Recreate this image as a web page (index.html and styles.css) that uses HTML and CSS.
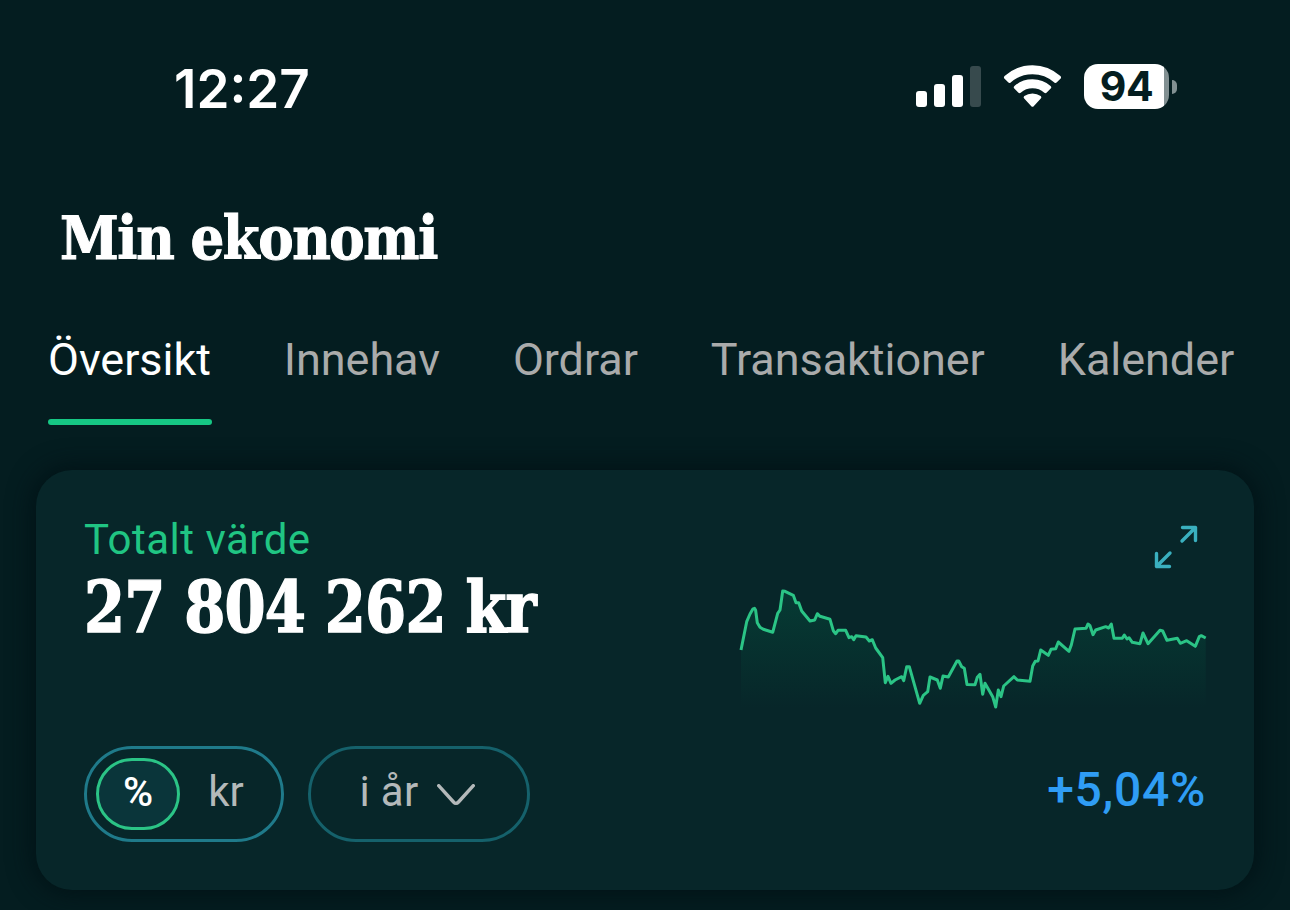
FILE: index.html
```
<!DOCTYPE html>
<html lang="sv">
<head>
    <meta charset="UTF-8">
    <meta name="viewport" content="width=device-width, initial-scale=1.0">
    <title>Min ekonomi</title>
    <link rel="stylesheet" href="styles.css">
</head>
<body>
    <div class="status-bar">
        <span class="time">12:27</span>
        <div class="status-icons">
            <svg class="signal" viewBox="0 0 66 42">
                <rect x="0" y="25" width="11" height="16" rx="3"/>
                <rect x="18" y="18" width="11" height="23" rx="3"/>
                <rect x="36" y="9" width="11" height="32" rx="3"/>
                <rect class="dim" x="54" y="0" width="11" height="41" rx="3"/>
            </svg>
            <svg class="wifi" viewBox="1003 65 59 43">
                <path d="M1004.6 78.8Q1003.2 77.4 1004.6 76.1Q1016.5 65.2 1032.5 65.2Q1048.500 65.200 1060.400 76.100Q1061.800 77.400 1060.400 78.800L1056.600 82.600Q1055.500 83.600 1054.300 82.500Q1045 74.200 1032.500 74.200Q1020 74.200 1010.700 82.500Q1009.500 83.600 1008.400 82.600Z"/>
                <path d="M1014.300 88.600Q1013.100 87.300 1014.400 86.100Q1022 79.300 1032.500 79.300Q1043 79.300 1050.600 86.100Q1051.900 87.300 1050.700 88.600L1046.500 92.700Q1045.500 93.600 1044.300 92.700Q1039.200 88.300 1032.500 88.300Q1025.800 88.300 1020.700 92.700Q1019.500 93.600 1018.500 92.700Z"/>
                <path d="M1024.200 98.500Q1022.900 97.200 1024.300 96.100Q1027.900 93.600 1032.500 93.600Q1037.100 93.600 1040.700 96.100Q1042.100 97.200 1040.800 98.500L1033.700 106.200Q1032.500 107.400 1031.300 106.200Z"/>
            </svg>
            <div class="battery"><span class="battery-level">94</span></div>
        </div>
    </div>

    <h1>Min ekonomi</h1>

    <nav class="tabs">
        <a class="tab active">Översikt</a>
        <a class="tab">Innehav</a>
        <a class="tab">Ordrar</a>
        <a class="tab">Transaktioner</a>
        <a class="tab">Kalender</a>
    </nav>

    <section class="card">
        <div class="card-top">
            <div class="total">
                <p class="label">Totalt värde</p>
                <p class="amount">27 804 262 kr</p>
            </div>
            <div class="chart-box">
                <svg class="expand" viewBox="0 0 44 44">
                    <path d="M28.500 2.500H41.500V15.500M41.500 2.500L28 16"/>
                    <path d="M2.500 28.500V41.500H15.500M2.500 41.500L16 28"/>
                </svg>
                <svg class="chart" viewBox="738 585 470 130">
                    <defs>
                        <linearGradient id="fade" x1="0" y1="590" x2="0" y2="708" gradientUnits="userSpaceOnUse">
                            <stop offset="0" stop-color="#063f36"/>
                            <stop offset="1" stop-color="#063f36" stop-opacity="0"/>
                        </linearGradient>
                    </defs>
                    <path id="area" class="area"/>
                    <polyline id="line" class="line" points="741,650 746.700,621.700 750,614 753,608.800 754.500,608.300 755.600,610 757.300,622.700 760,627.300 763.300,629.300 772.700,632.300 777.700,613.300 780,610 782.700,591 785,591.300 793.300,595.300 796,602.700 798.700,602.700 801.700,611 810,621 814.700,620 817.300,613.700 820,616.300 830,619.300 833.300,630.700 835.700,633.700 838,630.300 845.700,630.300 849,637.700 851.700,636.700 853.700,639.700 856,635.700 866,637 869.300,641 872.300,639.700 875.700,648 882.700,657.700 885.300,682.700 888,676.300 891,683.300 895,680 901.700,676.700 903.700,680.700 906.700,666.700 909.300,666.700 919.700,703.300 923.300,695.300 927.700,691.700 930,677 937.300,680 940.300,688.300 943,676 948.300,677 957,661 958.700,661 961.700,666.700 964.300,668.300 967,684.500 975,684.700 977.300,677.300 980,674.300 982.700,694.300 985,683.300 992.700,696.700 995.700,707 998.300,690 1001,696.700 1003.700,686 1014,676.700 1017.300,680 1030,681.300 1032.700,666 1035.300,661.300 1038,661 1040.700,650 1048.300,655.300 1051,649.300 1055.700,648.700 1058.300,642 1069,651.300 1071.300,645 1075,629 1086,628.300 1088,624 1090,625.700 1093,634.700 1095.700,630 1105.700,626.700 1108.700,628 1111.300,624 1114,638.300 1122.300,638.300 1124.300,635 1127,639 1129,637.700 1132.300,642.300 1140,643.700 1143,633 1148,643.700 1160,630.300 1162.700,631 1167,640.300 1177.300,638.300 1180.300,643.300 1186.700,640.700 1195.300,646.300 1199.300,636.700 1201.300,635.700 1205.700,638"/>
                </svg>
            </div>
        </div>
        <div class="card-bottom">
            <div class="toggle">
                <button class="unit selected">%</button>
                <button class="unit">kr</button>
            </div>
            <button class="period">
                i år
                <svg class="chevron" viewBox="0 0 38 22">
                    <path d="M1.700 1.700L16.500 18Q19 20.800 21.500 18L36.300 1.700"/>
                </svg>
            </button>
            <span class="change">+5,04%</span>
        </div>
    </section>

    <script>
        // Fill the area under the line
        const line = document.getElementById("line");
        const points = line.getAttribute("points");
        document.getElementById("area").setAttribute("d", "M741 710L" + points + "L1205.7 710Z");
    </script>
</body>
</html>
```
FILE: styles.css
```
* {
    margin: 0;
    padding: 0;
    box-sizing: border-box;
}

body {
    width: 1290px;
    height: 910px;
    overflow: hidden;
    background: #041d20;
    color: #fff;
    font-family: Roboto, "Liberation Sans", sans-serif;
}

svg {
    display: block;
}

.status-bar {
    height: 174px;
    padding: 0 113px 2px 174px;
    display: flex;
    justify-content: space-between;
    align-items: center;
}

.time {
    font-family: Inter, sans-serif;
    font-size: 53px;
    font-weight: 600;
    line-height: 60px;
    margin-top: 5px;
}

.status-icons {
    display: flex;
    align-items: center;
}

.signal {
    width: 66px;
    height: 42px;
    fill: #fff;
    margin-right: 21px;
    margin-top: 2px;
}

.signal .dim {
    fill: #374a4d;
}

.wifi {
    width: 59px;
    height: 43px;
    fill: #fff;
    margin-right: 22px;
}

.battery {
    position: relative;
    width: 85px;
    height: 45px;
    border-radius: 14px;
    background: linear-gradient(to right, #fff 80px, #829092 80px);
    text-align: center;
    margin-right: 8px;
}

.battery::after {
    content: "";
    position: absolute;
    left: 88px;
    top: 16px;
    width: 5px;
    height: 14px;
    border-radius: 0 6px 6px 0;
    background: #829092;
}

.battery-level {
    font-family: Inter, sans-serif;
    font-size: 41px;
    font-weight: 700;
    line-height: 45px;
    letter-spacing: -0.5px;
    color: #041d20;
}

h1 {
    height: 130px;
    padding-left: 60px;
    font-family: "Roboto Slab", "DejaVu Serif", serif;
    font-size: 59px;
    font-weight: 700;
    font-stretch: condensed;
    line-height: 130px;
    letter-spacing: -1.4px;
    white-space: nowrap;
    -webkit-text-stroke: 1px #fff;
}

.tabs {
    height: 121px;
    padding-left: 48px;
    display: flex;
    gap: 73px;
}

.tab {
    height: 121px;
    padding-top: 26px;
    font-size: 45px;
    line-height: 60px;
    letter-spacing: -0.06px;
    color: #aaabab;
    white-space: nowrap;
}

.tab.active {
    color: #fff;
}

.tab.active::after {
    content: "";
    display: block;
    height: 6px;
    margin: 29px -1px 0 0;
    border-radius: 3px;
    background: #16c784;
}

.card {
    width: 1218px;
    height: 420px;
    margin: 45px 36px 0;
    padding: 48px;
    border-radius: 36px;
    background: #072629;
    box-shadow: 0 0 24px 4px rgba(0, 16, 20, 0.8);
}

.card-top {
    height: 228px;
    display: flex;
    justify-content: space-between;
}

.label {
    font-size: 42px;
    line-height: 44px;
    letter-spacing: 0.5px;
    color: #20c583;
}

.amount {
    width: 500px;
    font-family: "Roboto Slab", "DejaVu Serif", serif;
    font-size: 71px;
    font-weight: 700;
    font-stretch: condensed;
    line-height: 90px;
    letter-spacing: -0.9px;
    white-space: nowrap;
    -webkit-text-stroke: 1.4px #fff;
    transform: scaleX(0.925);
    transform-origin: left;
}

.chart-box {
    display: flex;
    flex-direction: column;
    align-items: flex-end;
}

.expand {
    width: 44px;
    height: 44px;
    margin: 7px 8px 16px 0;
    fill: none;
    stroke: #3ab0bf;
    stroke-width: 3.4;
    stroke-linecap: round;
    stroke-linejoin: round;
}

.chart {
    width: 470px;
    height: 130px;
    margin-right: -2px;
}

.area {
    fill: url(#fade);
    opacity: 0.85;
}

.line {
    fill: none;
    stroke: #2bc486;
    stroke-width: 3;
    stroke-linejoin: round;
}

.card-bottom {
    display: flex;
    align-items: center;
    height: 96px;
}

button {
    background: none;
    border: none;
    color: #b4b9ba;
    font-family: inherit;
    font-size: 42px;
}

.toggle {
    width: 200px;
    height: 96px;
    padding: 9px;
    display: flex;
    border: 3px solid #1f7a8a;
    border-radius: 48px;
    margin-right: 24px;
}

.unit {
    width: 92px;
    height: 72px;
    padding-bottom: 5px;
}

.unit.selected {
    width: 84px;
    border: 3px solid #2bc486;
    border-radius: 36px;
    background: #0a353a;
    color: #fff;
    font-size: 41px;
    font-weight: 500;
}

.period {
    width: 222px;
    height: 96px;
    padding: 0 3px 5px 0;
    display: flex;
    justify-content: center;
    align-items: center;
    gap: 19px;
    border: 3px solid #15616b;
    border-radius: 48px;
    letter-spacing: 0.3px;
}

.chevron {
    width: 38px;
    height: 22px;
    margin-top: 7px;
    fill: none;
    stroke: #b4b9ba;
    stroke-width: 3.4;
    stroke-linecap: round;
}

.change {
    margin-left: auto;
    padding-bottom: 10px;
    font-size: 48px;
    font-weight: 500;
    letter-spacing: 0.7px;
    color: #2f9df4;
}
```
